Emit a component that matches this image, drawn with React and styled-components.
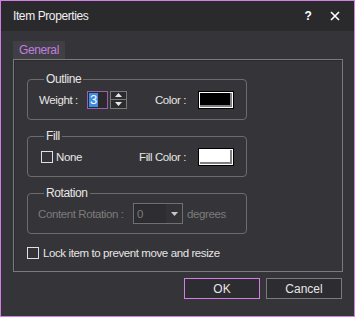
import styled, { createGlobalStyle } from "styled-components"

const GlobalStyle = createGlobalStyle`
    body {
        margin: 0;
        background: #353438;
        font-family: "Liberation Sans", Arial, sans-serif;
        font-size: 11.5px;
        letter-spacing: -0.4px;
    }
`

export default function App() {
    return (
        <Window>
            <GlobalStyle />
            <TitleBar>
                <Title>Item Properties</Title>
                <TitleButton>?</TitleButton>
                <TitleButton>
                    <svg width="10" height="10" viewBox="0 0 10 10">
                        <path d="M1 1 L9 9 M9 1 L1 9" stroke="#fff" strokeWidth="1.6" />
                    </svg>
                </TitleButton>
            </TitleBar>

            <Body>
                <Tab>General</Tab>
                <TabPanel>
                    <Group>
                        <Legend>Outline</Legend>
                        <Row>
                            <Label width={48}>Weight :</Label>
                            <SpinInput>
                                <Selected>3</Selected>
                            </SpinInput>
                            <SpinButtons>
                                <SpinHalf>
                                    <svg width="7" height="4" viewBox="0 0 7 4"><path d="M0 4 L3.5 0 L7 4 Z" fill="#e8e8e8" /></svg>
                                </SpinHalf>
                                <SpinHalf>
                                    <svg width="7" height="4" viewBox="0 0 7 4"><path d="M0 0 L3.5 4 L7 0 Z" fill="#e8e8e8" /></svg>
                                </SpinHalf>
                            </SpinButtons>
                            <RightCluster>
                                <Label>Color :</Label>
                                <Swatch color="#000" />
                            </RightCluster>
                        </Row>
                    </Group>

                    <Group>
                        <Legend>Fill</Legend>
                        <Row indent={2}>
                            <CheckLabel>
                                <CheckBox />
                                None
                            </CheckLabel>
                            <RightCluster>
                                <Label>Fill Color :</Label>
                                <Swatch color="#fff" />
                            </RightCluster>
                        </Row>
                    </Group>

                    <Group>
                        <Legend>Rotation</Legend>
                        <Row indent={-1}>
                            <Label width={95} disabled>Content Rotation :</Label>
                            <Select>
                                <span>0</span>
                                <SelectArrow>
                                    <svg width="7" height="4" viewBox="0 0 7 4"><path d="M0 0 L3.5 4 L7 0 Z" fill="#c8c8c8" /></svg>
                                </SelectArrow>
                            </Select>
                            <Label disabled>degrees</Label>
                        </Row>
                    </Group>

                    <LockRow>
                        <CheckBox />
                        Lock item to prevent move and resize
                    </LockRow>
                </TabPanel>

                <Footer>
                    <Button primary>OK</Button>
                    <Button>Cancel</Button>
                </Footer>
            </Body>
        </Window>
    )
}

const Window = styled.div`
    width: 355px;
    height: 317px;
    box-sizing: border-box;
    border: 1px solid #d17fe6;
    background: #353438;
    color: #e6e6e6;
    display: flex;
    flex-direction: column;
`

const TitleBar = styled.div`
    height: 30px;
    background: #2a2a2d;
    display: flex;
    align-items: center;
    padding: 0 13px 0 12px;
    gap: 15px;
`

const Title = styled.div`
    flex: 1;
    color: #f0f0f0;
    font-size: 12px;
`

const TitleButton = styled.div`
    width: 12px;
    display: flex;
    justify-content: center;
    color: #fff;
    font-size: 12px;
    font-weight: bold;
`

const Body = styled.div`
    flex: 1;
    padding: 10px 11px 0 12px;
    display: flex;
    flex-direction: column;
`

const Tab = styled.div`
    align-self: flex-start;
    height: 18px;
    line-height: 18px;
    padding: 0 6px;
    background: #403f45;
    color: #c07ede;
    font-size: 12px;
`

const TabPanel = styled.div`
    height: 213px;
    box-sizing: border-box;
    border: 1px solid #7a7a7a;
    box-shadow: inset 1px 1px 0 #2b2a2e;
    padding: 12px 95px 0 13px;
    display: flex;
    flex-direction: column;
    gap: 9px;
`

const Group = styled.fieldset`
    margin: 0;
    padding: 4px 12px 10px 11px;
    border: 1px solid #6c6c6c;
    border-radius: 4px;
    min-width: 0;
`

const Legend = styled.legend`
    padding: 0 2px;
    margin-left: 5px;
    line-height: 14px;
    font-size: 12px;
    color: #e6e6e6;
`

const Row = styled.div`
    display: flex;
    align-items: center;
    height: 19px;
    padding-left: ${(p) => p.indent || 0}px;
    margin-left: ${(p) => (p.indent < 0 ? p.indent : 0)}px;
`

const Label = styled.span`
    width: ${(p) => (p.width ? p.width + "px" : "auto")};
    flex-shrink: 0;
    color: ${(p) => (p.disabled ? "#7c7c7c" : "#e6e6e6")};
    white-space: nowrap;
`

const SpinInput = styled.div`
    width: 18px;
    height: 16px;
    border: 1px solid #9a5fb0;
    background: #2a292d;
    padding-left: 1px;
    display: flex;
    align-items: center;
`

const Selected = styled.span`
    background: #3d8ee8;
    color: #fff;
    font-size: 13px;
    line-height: 14px;
    padding: 0 1px;
`

const SpinButtons = styled.div`
    margin-left: 2px;
    display: flex;
    flex-direction: column;
    height: 18px;
`

const SpinHalf = styled.div`
    width: 15px;
    height: 8px;
    border: 1px solid #7a7a7a;
    background: #2c2b2f;
    display: flex;
    align-items: center;
    justify-content: center;

    & + & {
        border-top: none;
    }
`

const RightCluster = styled.div`
    margin-left: auto;
    display: flex;
    align-items: center;
    gap: 12px;
`

const Swatch = styled.div`
    width: 34px;
    height: 16px;
    background: ${(p) => p.color};
    border: 1px solid #000;
    box-shadow: inset 1px 1px 0 #fff, inset -1px -1px 0 #fff, inset -3px -3px 0 #808080;
`

const CheckBox = styled.span`
    width: 10px;
    height: 10px;
    border: 1px solid #e0e0e0;
    flex-shrink: 0;
`

const CheckLabel = styled.label`
    display: flex;
    align-items: center;
    gap: 3px;
`

const Select = styled.div`
    width: 45px;
    height: 19px;
    border: 1px solid #707070;
    box-shadow: inset 0 0 0 1px #2a2a2d;
    background: #2e2d31;
    display: flex;
    align-items: center;
    padding-left: 3px;
    margin-right: 4px;
    color: #7c7c7c;

    span {
        flex: 1;
    }
`

const SelectArrow = styled.div`
    width: 16px;
    align-self: stretch;
    display: flex;
    align-items: center;
    justify-content: center;
    background: #333236;
`

const LockRow = styled.label`
    display: flex;
    align-items: center;
    gap: 4px;
    margin-top: 4px;
    white-space: nowrap;
`

const Footer = styled.div`
    display: flex;
    justify-content: flex-end;
    gap: 6px;
    padding: 6px 1px 0 0;
`

const Button = styled.button`
    width: 76px;
    height: 21px;
    box-sizing: border-box;
    font: inherit;
    letter-spacing: 0;
    font-size: 12px;
    color: #e6e6e6;
    background: #2d2c30;
    border: 1px solid ${(p) => (p.primary ? "#d17fe6" : "#7a7a7a")};
`
